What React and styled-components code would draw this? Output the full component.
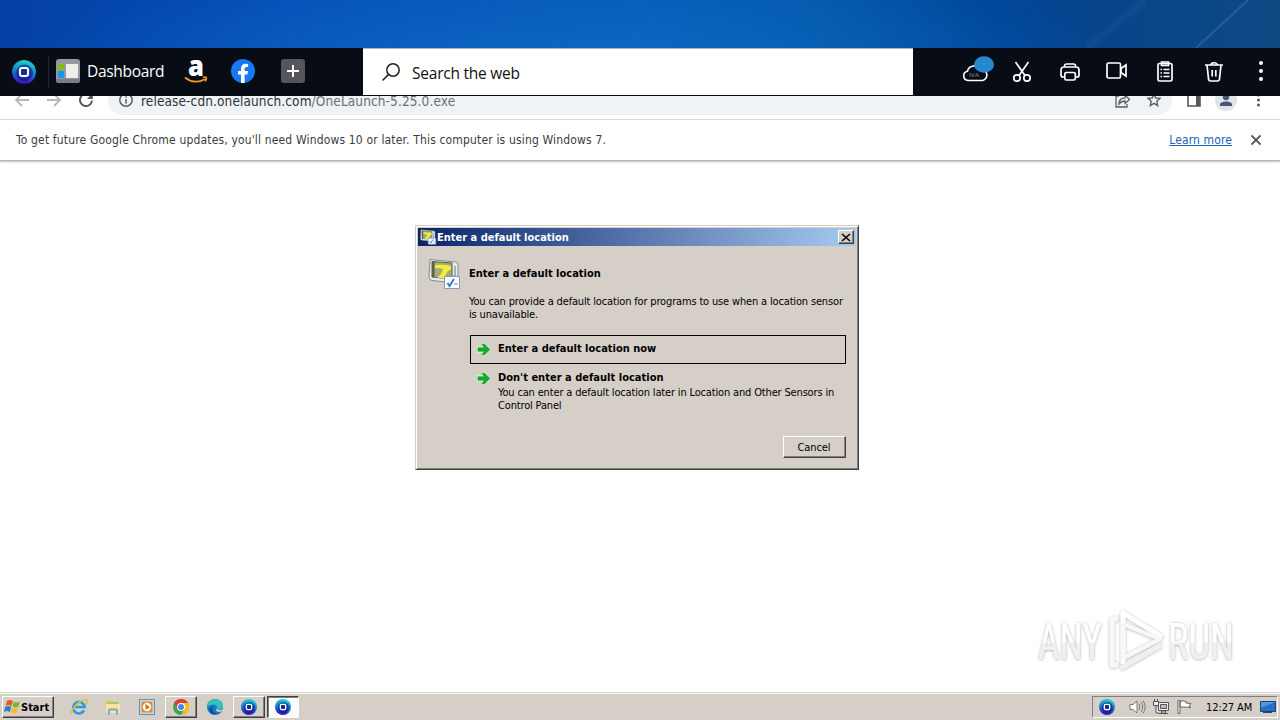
import React from 'react';
import styled, {createGlobalStyle} from 'styled-components';

// CSS starts
const GlobalStyle = createGlobalStyle`
    * { box-sizing: border-box; }
    body {
      margin: 0;
      overflow: hidden;
      background: #fff;
      font-family: "DejaVu Sans Condensed", "DejaVu Sans", sans-serif;
      font-stretch: condensed;
    }
`;

const Desktop = styled.div`
      position: relative;
      display: flex;
      flex-direction: column;
      width: 1280px;
      height: 720px;
      overflow: hidden;
      background: #fff;
`;

const Wallpaper = styled.div`
      height: 48px;
      flex: none;
      background:
        linear-gradient(to bottom right, transparent 47.5%, rgba(110, 165, 215, 0.28) 50%, transparent 52.5%) 1196px 0 / 52px 48px no-repeat,
        linear-gradient(to bottom right, transparent 42%, rgba(90, 150, 205, 0.09) 50%, transparent 58%) 1086px 0 / 60px 48px no-repeat,
        radial-gradient(ellipse 560px 90px at 560px 60px, rgba(20, 112, 200, 0.6), transparent),
        linear-gradient(90deg, #0440a4 0, #0450b8 300px, #065cb8 640px, #0258ac 820px, #00469a 1000px, #084488 1120px, #104a84 1280px);
`;

const Svg = styled.svg`
      display: block;
      flex: none;
      margin-left: ${(props) => props.$ml || 0}px;
      margin-top: ${(props) => props.$mt || 0}px;
      overflow: visible;
`;

const LaunchBar = styled.div`
      display: flex;
      align-items: center;
      flex: none;
      height: 48px;
      background: #080c15;
      color: #fff;
      font-family: "Open Sans", "Noto Sans", sans-serif;
      font-stretch: normal;
`;

const LaunchLeft = styled.div`
      display: flex;
      align-items: center;
      flex: none;
      width: 363px;
      height: 48px;
      padding-left: 12px;
`;

const Divider = styled.div`
      flex: none;
      width: 1px;
      height: 32px;
      margin: 0 7px 0 12px;
      background: #20242d;
`;

const DashboardLabel = styled.span`
      flex: none;
      width: 97px;
      margin: -2px 0 0 7px;
      font-size: 15.5px;
      line-height: 24px;
      letter-spacing: -0.32px;
`;

const SearchBox = styled.div`
      display: flex;
      align-items: center;
      flex: none;
      width: 550px;
      height: 47px;
      margin-bottom: 1px;
      padding-left: 19px;
      border-top: 1px solid #a9b4cd;
      background: #fff;
      color: #111;
      font-size: 15.5px;
`;

const SearchLabel = styled.span`
      margin: 2px 0 0 12px;
      letter-spacing: -0.23px;
`;

const BrowserBar = styled.div`
      height: 24px;
      flex: none;
      overflow: hidden;
      border-bottom: 1px solid #d9dadc;
      background: #fff;
`;

const BrowserTools = styled.div`
      display: flex;
      align-items: center;
      height: 30px;
      margin-top: -11px;
      padding-left: 14px;
`;

const AddressBox = styled.div`
      display: flex;
      align-items: center;
      width: 1064px;
      height: 29px;
      margin-left: 14px;
      padding-left: 11px;
      border-radius: 15px;
      background: #f0f3f5;
`;

const Address = styled.span`
      width: 974px;
      margin: 1px 0 0 8px;
      color: #303236;
      font-size: 13.5px;
      letter-spacing: ${(props) => props.$ls || 0}px;
      white-space: nowrap;
`;

const AddressPath = styled.span`
      color: #6c7075;
`;

const InfoBar = styled.div`
      display: flex;
      align-items: center;
      flex: none;
      height: 41px;
      padding: 0 19px 0 16px;
      background: #fff;
      border-bottom: 1px solid #b4b4b4;
      box-shadow: 0 1px 2px #c2c2c2;
      color: #3c3c3c;
      font-size: 12px;
`;

const InfoText = styled.span`
      flex: 1;
      letter-spacing: ${(props) => props.$ls || 0}px;
      white-space: nowrap;
`;

const LearnMore = styled.a`
      color: #1a62b8;
      font-size: 12px;
      letter-spacing: ${(props) => props.$ls || 0}px;
      text-decoration: underline;
`;

const Page = styled.div`
      flex: 1;
`;

const Dialog = styled.div`
      position: absolute;
      left: 415px;
      top: 225px;
      width: 444px;
      height: 245px;
      padding: 2px;
      border: 1px solid;
      border-color: #d6cfc8 #404040 #404040 #d6cfc8;
      box-shadow: inset 1px 1px #fff, inset -1px -1px #808080;
      background: #d6cfc8;
      color: #000;
      font-size: 11px;
`;

const TitleBar = styled.div`
      display: flex;
      align-items: center;
      height: 18px;
      padding: 0 2px;
      background: linear-gradient(90deg, #0a246a, #a6caf0);
`;

const TitleText = styled.span`
      flex: 1;
      margin-left: 1px;
      color: #fff;
      font-weight: bold;
      letter-spacing: ${(props) => props.$ls || 0}px;
`;

const CloseButton = styled.div`
      display: flex;
      align-items: center;
      justify-content: center;
      width: 16px;
      height: 14px;
      border: 1px solid;
      border-color: #fff #404040 #404040 #fff;
      box-shadow: inset -1px -1px #808080;
      background: #d6cfc8;
`;

const DialogBody = styled.div`
      display: flex;
      padding: 12px 10px 0 10px;
`;

const DialogContent = styled.div`
      width: 377px;
      margin-left: 9px;
`;

const Heading = styled.div`
      margin-top: 9px;
      font-weight: bold;
      line-height: 13px;
      letter-spacing: ${(props) => props.$ls || 0}px;
`;

const Paragraph = styled.div`
      margin-top: ${(props) => props.$mt || 0}px;
      line-height: 13px;
      white-space: nowrap;
      letter-spacing: ${(props) => props.$ls || 0}px;
`;

const Choice = styled.div`
      display: flex;
      width: 376px;
      margin-left: 1px;
      margin-top: ${(props) => props.$mt || 0}px;
      min-height: 29px;
      padding: 6px 0 0 5px;
      border: 1px solid ${(props) => (props.$focused ? '#000' : 'transparent')};
`;

const ChoiceText = styled.div`
      margin-left: 7px;
`;

const ChoiceTitle = styled.div`
      font-weight: bold;
      line-height: 14px;
      white-space: nowrap;
      letter-spacing: ${(props) => props.$ls || 0}px;
`;

const CancelButton = styled.div`
      width: 63px;
      height: 22px;
      margin: 23px 0 0 314px;
      border: 1px solid;
      border-color: #fff #404040 #404040 #fff;
      box-shadow: inset -1px -1px #808080;
      padding-right: 1px;
      line-height: 21px;
      text-align: center;
      letter-spacing: -0.1px;
`;

const Watermark = styled.div`
      position: absolute;
      left: 1037px;
      top: 608px;
      display: flex;
      align-items: center;
`;

const TaskBar = styled.div`
      display: flex;
      flex: none;
      height: 28px;
      padding: 3px 2px 2px;
      border-top: 1px solid #d6cfc8;
      box-shadow: inset 0 1px #fff;
      background: #d6cfc8;
      color: #000;
      font-size: 11px;
`;

const StartButton = styled.div`
      display: flex;
      align-items: center;
      width: 52px;
      height: 22px;
      margin-right: 9px;
      padding-left: 1px;
      border: 1px solid;
      border-color: #fff #404040 #404040 #fff;
      box-shadow: inset -1px -1px #808080;
      font-weight: bold;
      letter-spacing: ${(props) => props.$ls || 0}px;
`;

const TaskButton = styled.div`
      display: flex;
      align-items: center;
      justify-content: center;
      width: ${(props) => props.$w || 32}px;
      height: 22px;
      margin-right: 2px;
      border: 1px solid ${(props) => (props.$state ? '' : 'transparent')};
      ${(props) => props.$state === 'raised' && `
        border-color: #fff #404040 #404040 #fff;
        box-shadow: inset -1px -1px #808080;
      `}
      ${(props) => props.$state === 'pressed' && `
        border-color: #404040 #fff #fff #404040;
        box-shadow: inset 1px 1px #808080;
        background: #fcfcfc;
      `}
`;

const Tray = styled.div`
      display: flex;
      align-items: center;
      width: 186px;
      height: 22px;
      margin-left: auto;
      padding-left: 6px;
      border: 1px solid;
      border-color: #808080 #fff #fff #808080;
      white-space: nowrap;
`;

const Clock = styled.span`
      flex: none;
      width: 47px;
      margin-left: 13px;
      letter-spacing: ${(props) => props.$ls || 0}px;
`;
// CSS ends

const Orb = ({id, size, ml}) => (
    <Svg $ml={ml} width={size} height={size} viewBox="0 0 24 24">
        <defs>
            <linearGradient id={id} x1="0.6" y1="0" x2="0.4" y2="1">
                <stop offset="0" stopColor="#1fd8c8"/>
                <stop offset="0.5" stopColor="#1480cc"/>
                <stop offset="1" stopColor="#3a0cb4"/>
            </linearGradient>
            <linearGradient id={`${id}Core`} x1="0" y1="0" x2="0" y2="1">
                <stop offset="0" stopColor="#0b5aa4"/>
                <stop offset="1" stopColor="#2414a0"/>
            </linearGradient>
        </defs>
        <circle cx="12" cy="12" r="12" fill={`url(#${id})`}/>
        <circle cx="12.500" cy="13" r="8.400" fill={`url(#${id}Core)`}/>
        <rect x="8" y="8" width="8" height="8" rx="2" fill="#10308c" stroke="#fff" strokeWidth="2"/>
    </Svg>
);

const DashboardIcon = () => (
    <Svg $mt={-2} width="24" height="24" viewBox="0 0 24 24">
        <rect width="24" height="24" rx="3" fill="#9299a3"/>
        <path d="M0 20h24v1a3 3 0 0 1-3 3H3a3 3 0 0 1-3-3z" fill="#777e89"/>
        <rect x="2" y="5" width="6" height="6" fill="#87b919"/>
        <rect x="2" y="12" width="6" height="7" fill="#1697e8"/>
        <rect x="10" y="5" width="12" height="14" fill="#f1eeea"/>
    </Svg>
);

const AmazonIcon = () => (
    <Svg $mt={-2} width="24" height="26" viewBox="0 0 24 26">
        <text x="4" y="18" fontFamily="Open Sans" fontSize="29" fontWeight="800" fill="#fff" textLength="16" lengthAdjust="spacingAndGlyphs">a</text>
        <path d="M1 19.500c6 5 14 5.500 20 1.500M19 19.300c3-.8 4.500-.3 2.200 4" fill="none" stroke="#f29a1c" strokeWidth="1.700"/>
    </Svg>
);

const FacebookIcon = () => (
    <Svg $ml={23} $mt={-2} width="24" height="24" viewBox="0 0 24 24">
        <circle cx="12" cy="12" r="12" fill="#1877f2"/>
        <path d="M10 24v-8.500H7V12h3V9.400C10 6.400 11.800 4.700 14.500 4.700l2.600.2v3h-1.500c-1.500 0-2 .9-2 1.800V12H17l-.5 3.500h-2.900V24z" fill="#fff"/>
    </Svg>
);

const PlusIcon = () => (
    <Svg $ml={26} $mt={-2} width="24" height="24" viewBox="0 0 24 24">
        <rect width="24" height="24" rx="3" fill="#54565b"/>
        <path d="M12 6v12M6 12h12" stroke="#fff" strokeWidth="2"/>
    </Svg>
);

const CloudIcon = () => (
    <Svg $ml={49} $mt={-3} width="32" height="28" viewBox="0 0 32 28">
        <path d="M6 23.500a4.700 4.700 0 0 1-.5-9.300 6.700 6.700 0 0 1 12.500-1.700 5.500 5.500 0 0 1 2.500 11z" fill="none" stroke="#fff" strokeWidth="1.600"/>
        <text x="7" y="20" fontSize="6" fill="#8a8d93" fontFamily="Liberation Sans">N/A</text>
        <ellipse cx="22" cy="7.500" rx="10" ry="8.200" fill="#2589cb"/>
    </Svg>
);

const ScissorsIcon = () => (
    <Svg $ml={19} width="18" height="20" viewBox="0 0 18 20" fill="none" stroke="#fff" strokeWidth="1.700">
        <circle cx="4" cy="16" r="3.200"/>
        <circle cx="14" cy="16" r="3.200"/>
        <path d="M2.500 0 12 13.500M15.500 0 6 13.500"/>
    </Svg>
);

const PrinterIcon = () => (
    <Svg $ml={29} width="20" height="18" viewBox="0 0 20 18" fill="none" stroke="#fff" strokeWidth="1.700">
        <path d="M4.500 4V3a2 2 0 0 1 2-2h7a2 2 0 0 1 2 2v1M4.500 14H3a2 2 0 0 1-2-2V7a3 3 0 0 1 3-3h12a3 3 0 0 1 3 3v5a2 2 0 0 1-2 2h-1.500"/>
        <rect x="4.800" y="9.500" width="10.500" height="7.500" rx="1.500"/>
    </Svg>
);

const VideoIcon = () => (
    <Svg $ml={26} $mt={-3} width="21" height="17" viewBox="0 0 21 17" fill="none" stroke="#fff" strokeWidth="1.700">
        <rect x="1" y="1" width="13.500" height="15" rx="1.500"/>
        <path d="M15 6.500 20 3v11l-5-3.500z"/>
    </Svg>
);

const ClipboardIcon = () => (
    <Svg $ml={30} $mt={-1} width="16" height="21" viewBox="0 0 16 21" fill="none" stroke="#fff" strokeWidth="1.700">
        <rect x="1" y="2.500" width="14" height="17.500" rx="1.500"/>
        <path d="M4.500 1h7v3.300h-7z"/>
        <path d="M3.500 8.500H5M6.500 8.500h6M3.500 12H5M6.500 12h6M3.500 15.500H5M6.500 15.500h6"/>
    </Svg>
);

const TrashIcon = () => (
    <Svg $ml={32} width="18" height="20" viewBox="0 0 18 20" fill="none" stroke="#fff" strokeWidth="1.700">
        <path d="M0 3h18M6 3c0-3 6-3 6 0M2 3l1.600 14.500A2 2 0 0 0 5.500 19h7a2 2 0 0 0 1.900-1.500L16 3M7.200 8v6.500M10.800 8v6.500"/>
    </Svg>
);

const MenuDots = () => (
    <Svg $ml={36} $mt={-2} width="4" height="20" viewBox="0 0 4 20" fill="#fff">
        <circle cx="2" cy="2" r="2"/>
        <circle cx="2" cy="10" r="2"/>
        <circle cx="2" cy="18" r="2"/>
    </Svg>
);

const LocationIcon = ({size}) => (
    <Svg width={size} height={size} viewBox="0 0 32 32">
        <path d="M2 1.500 28 4Q30 4.500 30 7v16l-2 2L4 22.500Q1 22 1 19z" fill="#e9ebea" stroke="#858d90"/>
        <path d="M4 3.500 24 5v16L4 19z" fill="#a3ad7c" stroke="#596148"/>
        <path d="M4 3.500h2.500V19H4z" fill="#596148"/>
        <path d="M7 7q7-1 16 1v3.500q-5 1-6 9l-8-1q5-3 6-8.500-3-1.500-8-1z" fill="#f4ee3a"/>
        <path d="M27 8v11" stroke="#a9b0b5" strokeWidth="2"/>
        <path d="M16.500 18.500h15v12h-15z" fill="#f8fbff" stroke="#8a9bb0"/>
        <path d="M17 18h14" stroke="#8494a8" strokeDasharray="1 1"/>
        <path d="m19.500 25 2 3 4.500-7" fill="none" stroke="#287cc4" strokeWidth="1.800"/>
        <path d="M26 26h4" stroke="#8091a6"/>
    </Svg>
);

const GreenArrow = () => (
    <Svg width="15" height="15" viewBox="0 0 15 15">
        <path d="M1.500 4.500h5V1.500h2l6 6-6 6h-2v-3h-5z" fill="#c9f3c4" stroke="#d3ecca"/>
        <path d="M2 5.800h6.500L6 2.300h2.500l5.300 5.200-5.300 5.200H6L8.500 9.200H2z" fill="#12ad30" stroke="#078720" strokeWidth=".5"/>
    </Svg>
);

const WindowsLogo = () => (
    <Svg width="17" height="16" viewBox="0 0 17 16">
        <path d="M3 2c2-1.500 4-1.500 6 0L7.500 7c-2-1.200-4-1.200-6 0z" fill="#e65b22"/>
        <path d="M10 2.500c2 1.200 4 1.200 6 0L14.500 7.500c-2 1.200-4 1.200-6 0z" fill="#72b72c"/>
        <path d="M1.200 8c2-1.200 4-1.200 6 0l-1.400 5c-2-1.500-4-1.500-6 0z" fill="#287fcc"/>
        <path d="M8.200 8.500c2 1.200 4 1.200 6 0l-1.400 5c-2 1.200-4 1.200-6 0z" fill="#f4bd25"/>
    </Svg>
);

const ExplorerIcon = () => (
    <Svg width="18" height="18" viewBox="0 0 18 18" fill="none">
        <path d="M14 12.500A5.800 5.800 0 1 1 14.700 9H5" stroke="#2a9ce0" strokeWidth="2.600"/>
        <path d="M2 16C-1 13 10 1.500 16 1.500c2 0 1 3 0 4.500" stroke="#e9bc36" strokeWidth="1.500"/>
    </Svg>
);

const FolderIcon = () => (
    <Svg width="16" height="16" viewBox="0 0 16 16">
        <path d="M1 1h5l1 1.500h7V14H1z" fill="#e9c965"/>
        <path d="M2 3h11v3H2z" fill="#9ccb75"/>
        <path d="M1 5h14v9H1z" fill="#f8e49b"/>
        <path d="M3 15.500v-4q0-2 2-2h6q2 0 2 2v4h-2v-4H5v4z" fill="#6baed7"/>
    </Svg>
);

const MediaIcon = () => (
    <Svg width="16" height="16" viewBox="0 0 16 16">
        <rect x=".5" y=".5" width="15" height="15" fill="#b9daf2" stroke="#5d92c1"/>
        <rect x="2.500" y="2.500" width="11" height="11" rx="1.500" fill="#f08a16"/>
        <circle cx="8" cy="8" r="4.200" fill="#fff"/>
        <path d="m6.500 5 4.500 3-4.500 3z" fill="#df6b0c"/>
    </Svg>
);

const ChromeIcon = () => (
    <Svg width="16" height="16" viewBox="0 0 16 16">
        <circle cx="8" cy="8" r="8" fill="#33a852"/>
        <path d="M1.100 4A8 8 0 0 1 15 4H8L4.500 10z" fill="#e63c30"/>
        <path d="M15 4a8 8 0 0 1-7 12l3.500-6L8 4z" fill="#fbc116"/>
        <circle cx="8" cy="8" r="4" fill="#fff"/>
        <circle cx="8" cy="8" r="3" fill="#4285f4"/>
    </Svg>
);

const EdgeIcon = () => (
    <Svg width="16" height="16" viewBox="0 0 16 16">
        <circle cx="8" cy="8" r="8" fill="#157bc4"/>
        <path d="M0 8C0-2 16-2 16 7c0 3-4 4.500-6.500 3 2-3-1-5-4-4.500C3 6 1 7 0 8z" fill="#35c3b4"/>
        <path d="M6 7c-2 4 1 7.500 5 7-6 3.500-10-1-8-5z" fill="#0b4f9b"/>
        <path d="M9.500 10c2 1.500 4.500 1 6.300 0L14 12.500c-3 1-5 0-5-2z" fill="#d6cfc8"/>
    </Svg>
);

const LaunchTools = () => (
    <>
        <CloudIcon/>
        <ScissorsIcon/>
        <PrinterIcon/>
        <VideoIcon/>
        <ClipboardIcon/>
        <TrashIcon/>
        <MenuDots/>
    </>
);

const BrowserToolbar = () => (
    <BrowserBar>
        <BrowserTools>
            <Svg width="16" height="16" viewBox="0 0 16 16" fill="none" stroke="#b6b7b9" strokeWidth="1.800">
                <path d="M15 8H2M8 2 2 8l6 6"/>
            </Svg>
            <Svg $ml={16} width="16" height="16" viewBox="0 0 16 16" fill="none" stroke="#b6b7b9" strokeWidth="1.800">
                <path d="M1 8h13M8 2l6 6-6 6"/>
            </Svg>
            <Svg $ml={16} width="16" height="16" viewBox="0 0 16 16" fill="none" stroke="#55585c" strokeWidth="2">
                <path d="M14 8.500a6 6 0 1 1-1.700-4.700"/>
                <path d="M14.800 1v6H9z" fill="#55585c" stroke="none"/>
            </Svg>
            <AddressBox>
                <Svg width="14" height="14" viewBox="0 0 14 14" fill="none" stroke="#5b5e62" strokeWidth="1.500">
                    <circle cx="7" cy="7" r="6.200"/>
                    <path d="M7 6v4.500M7 3.200v1.600"/>
                </Svg>
                <Address $ls={0.12}>release-cdn.onelaunch.com<AddressPath>/OneLaunch-5.25.0.exe</AddressPath></Address>
                <Svg width="15" height="15" viewBox="0 0 15 15" fill="none" stroke="#5b5e62" strokeWidth="1.300">
                    <path d="M4 3H1v11h11v-3M4 11c0-4 2-6 6-6V2l4.500 4.500L10 10.500V8C7 8 5.500 9 4 11z"/>
                </Svg>
                <Svg $ml={17} width="14" height="14" viewBox="0 0 14 14" fill="none" stroke="#5b5e62" strokeWidth="1.400">
                    <path d="m7 1 1.700 4 4.300.4-3.200 2.900.9 4.300L7 10.300l-3.700 2.300.9-4.300L1 5.400 5.300 5z"/>
                </Svg>
            </AddressBox>
            <Svg $ml={15} width="14" height="14" viewBox="0 0 14 14">
                <path d="M1 1h12v12H1z" fill="none" stroke="#55585c" strokeWidth="1.600"/>
                <path d="M9 1h4v12H9z" fill="#55585c"/>
            </Svg>
            <Svg $ml={14} width="22" height="22" viewBox="0 0 22 22">
                <circle cx="11" cy="11" r="11" fill="#dfe3ea"/>
                <circle cx="11" cy="8" r="3.200" fill="#4b5574"/>
                <path d="M5 17v-1.500c0-4 12-4 12 0V17z" fill="#4b5574"/>
            </Svg>
            <Svg $ml={20} width="3" height="14" viewBox="0 0 3 14" fill="#55585c">
                <circle cx="1.500" cy="2" r="1.500"/>
                <circle cx="1.500" cy="7" r="1.500"/>
                <circle cx="1.500" cy="12" r="1.500"/>
            </Svg>
        </BrowserTools>
    </BrowserBar>
);

const LocationDialog = () => (
    <Dialog>
        <TitleBar>
            <LocationIcon size={16}/>
            <TitleText>Enter a default location</TitleText>
            <CloseButton>
                <Svg width="8" height="7" viewBox="0 0 8 7" stroke="#000" strokeWidth="1.600">
                    <path d="m0 0 8 7M8 0 0 7"/>
                </Svg>
            </CloseButton>
        </TitleBar>
        <DialogBody>
            <LocationIcon size={32}/>
            <DialogContent>
                <Heading>Enter a default location</Heading>
                <Paragraph $mt={15} $ls={-0.16}>
                    You can provide a default location for programs to use when a location sensor<br/>
                    is unavailable.
                </Paragraph>
                <Choice $focused $mt={14}>
                    <GreenArrow/>
                    <ChoiceText>
                        <ChoiceTitle>Enter a default location now</ChoiceTitle>
                    </ChoiceText>
                </Choice>
                <Choice>
                    <GreenArrow/>
                    <ChoiceText>
                        <ChoiceTitle $ls={0.02}>Don't enter a default location</ChoiceTitle>
                        <Paragraph $mt={1} $ls={-0.16}>
                            You can enter a default location later in Location and Other Sensors in<br/>
                            Control Panel
                        </Paragraph>
                    </ChoiceText>
                </Choice>
                <CancelButton>Cancel</CancelButton>
            </DialogContent>
        </DialogBody>
    </Dialog>
);

const AnyRunMark = () => (
    <Watermark>
        <Svg width="200" height="68" viewBox="0 0 200 68">
            <defs>
                <filter id="markShadow" x="-10%" y="-20%" width="120%" height="140%">
                    <feDropShadow dx="0" dy="0.5" stdDeviation="1.800" floodColor="#000" floodOpacity="0.36"/>
                </filter>
                <linearGradient id="markFill" x1="0" y1="0" x2="0" y2="1">
                    <stop offset="0.5" stopColor="#fff"/>
                    <stop offset="0.52" stopColor="#f0f0f0"/>
                </linearGradient>
            </defs>
            <g filter="url(#markShadow)">
                <g fill="url(#markFill)" fontFamily="Roboto" fontSize="50" fontWeight="400">
                    <text x="1" y="51" textLength="64" lengthAdjust="spacingAndGlyphs">ANY</text>
                    <text x="131" y="51" textLength="66" lengthAdjust="spacingAndGlyphs">RUN</text>
                </g>
                <g fill="none" stroke="#f8f8f8" strokeWidth="4.500" strokeLinejoin="round">
                    <path d="M81 11h-6v46h6"/>
                    <path d="M86 56V5l39 24" stroke="#fff"/>
                    <path d="M86 16v34l37-19z" strokeWidth="4"/>
                    <path d="m84 60 40-23" stroke="#f0f0f0"/>
                </g>
            </g>
        </Svg>
    </Watermark>
);

const SystemTray = () => (
    <Tray>
        <Orb id="orbTray" size={16}/>
        <Svg $ml={14} width="17" height="16" viewBox="0 0 17 16" fill="none" stroke="#777">
            <path d="M1 5.500h3L8 2v12l-4-3.500H1z" fill="#fff"/>
            <path d="M10 5q2 3 0 6M12 3q3.500 5 0 10M14 1.500q4.500 6.500 0 13"/>
        </Svg>
        <Svg $ml={7} width="16" height="16" viewBox="0 0 16 16" fill="#eee" stroke="#555">
            <path d="M5.500 3.500h10v8h-10zM8.500 12h4v2h-4zM6 14.500h9"/>
            <path d="M7.500 5.500h6v4h-6z" fill="#bbb"/>
            <path d="M.5 2.500h5v4h-5zM1.500 0v2M4.500 0v2M3 6.500V14h3"/>
        </Svg>
        <Svg $ml={8} width="16" height="16" viewBox="0 0 16 16" fill="#fff" stroke="#666">
            <path d="M1 1.500h2v13H1zM3 2.500q3-1.500 6 0v1.500l5 .5-2 2.500 2 1.500-7-.5H3z"/>
        </Svg>
        <Clock $ls={-0.1}>12:27 AM</Clock>
        <Svg $ml={7} width="16" height="14" viewBox="0 0 16 14">
            <path d="M.5 1.500h15v10H.5z" fill="#2470c8" stroke="#174276"/>
            <path d="M1 2h14L1 8z" fill="#5298dc"/>
            <path d="M3 12.500h9" stroke="#29435f"/>
        </Svg>
    </Tray>
);

const App = () => (
    <>
        <GlobalStyle/>
        <Desktop>
            <Wallpaper/>
            <LaunchBar>
                <LaunchLeft>
                    <Orb id="orbMain" size={24}/>
                    <Divider/>
                    <DashboardIcon/>
                    <DashboardLabel>Dashboard</DashboardLabel>
                    <AmazonIcon/>
                    <FacebookIcon/>
                    <PlusIcon/>
                </LaunchLeft>
                <SearchBox>
                    <Svg width="18" height="18" viewBox="0 0 18 18" fill="none" stroke="#222" strokeWidth="1.500">
                        <circle cx="11" cy="7" r="6.200"/>
                        <path d="M6.600 11.400.5 17.500"/>
                    </Svg>
                    <SearchLabel>Search the web</SearchLabel>
                </SearchBox>
                <LaunchTools/>
            </LaunchBar>
            <BrowserToolbar/>
            <InfoBar>
                <InfoText $ls={0.16}>To get future Google Chrome updates, you'll need Windows 10 or later. This computer is using Windows 7.</InfoText>
                <LearnMore $ls={0.12}>Learn more</LearnMore>
                <Svg $ml={19} width="10" height="10" viewBox="0 0 10 10" stroke="#55585c" strokeWidth="1.800">
                    <path d="m.5.5 9 9M9.500.5l-9 9"/>
                </Svg>
            </InfoBar>
            <Page/>
            <TaskBar>
                <StartButton><WindowsLogo/>Start</StartButton>
                <TaskButton><ExplorerIcon/></TaskButton>
                <TaskButton><FolderIcon/></TaskButton>
                <TaskButton><MediaIcon/></TaskButton>
                <TaskButton $state="raised"><ChromeIcon/></TaskButton>
                <TaskButton><EdgeIcon/></TaskButton>
                <TaskButton $state="raised"><Orb id="orbTask" size={16}/></TaskButton>
                <TaskButton $state="pressed"><Orb id="orbActive" size={16}/></TaskButton>
                <SystemTray/>
            </TaskBar>
            <LocationDialog/>
            <AnyRunMark/>
        </Desktop>
    </>
);

export default App;
